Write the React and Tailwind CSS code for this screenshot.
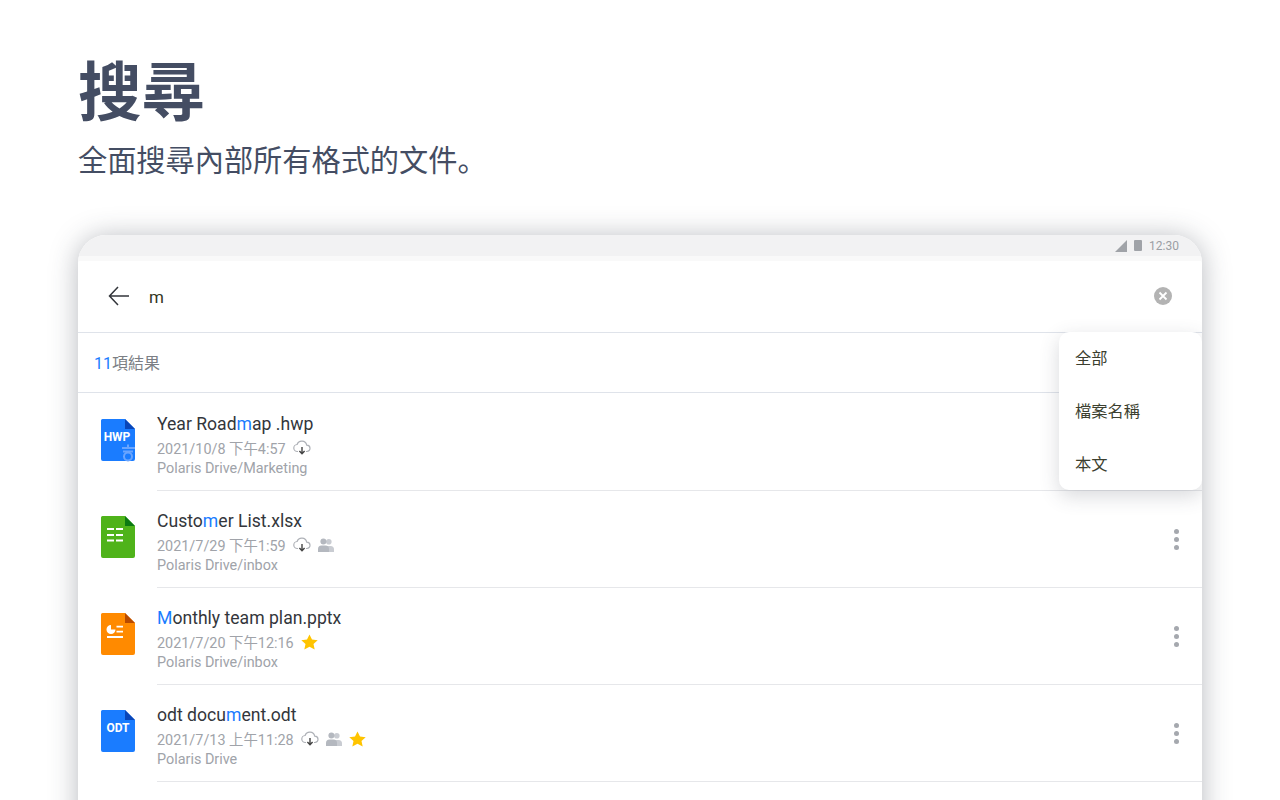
import React from "react";

const FONT = { fontFamily: '"Roboto", "Noto Sans CJK SC", sans-serif' };

const FileIcon = ({ color, fold, children }) => (
   <svg width="36" height="44" viewBox="0 0 36 44" className="shrink-0">
      <path d="M2.5 1 H25 L35 11 V41 a2 2 0 0 1 -2 2 H3 a2 2 0 0 1 -2 -2 V2.5 a1.5 1.5 0 0 1 1.5 -1.5 Z" fill={color} />
      <path d="M25 1 L35 11 H25 Z" fill={fold} />
      {children}
   </svg>
);

const HwpIcon = () => (
   <FileIcon color="#1a7cff" fold="#0a46b8">
      <text x="17" y="23" textAnchor="middle" fill="#fff" fontSize="12" fontWeight="700" fontFamily="Roboto">HWP</text>
      <g stroke="#6aa5ff" strokeWidth="2" fill="none">
         <path d="M22 30 h13 M28 26.5 v3 M23 33.5 h10" />
         <circle cx="28" cy="38.5" r="4" />
      </g>
   </FileIcon>
);

const XlsIcon = () => (
   <FileIcon color="#4fb31a" fold="#0b7a12">
      <g stroke="#fff" strokeWidth="2">
         <path d="M7 14 h7 M16 14 h7 M7 20 h7 M16 20 h7 M7 25.5 h7 M16 25.5 h7" />
      </g>
   </FileIcon>
);

const PptIcon = () => (
   <FileIcon color="#ff8a00" fold="#b84a00">
      <path d="M11 13 a4.5 4.5 0 1 0 4.5 4.5 h-4.5 Z" fill="#fff" />
      <path d="M16.5 14.6 h6.5 M16.5 19.7 h6.5" stroke="#fff" strokeWidth="1.8" />
      <path d="M7 25 h16" stroke="#fff" strokeWidth="2" />
   </FileIcon>
);

const OdtIcon = () => (
   <FileIcon color="#1a7cff" fold="#0a46b8">
      <text x="18" y="23" textAnchor="middle" fill="#fff" fontSize="12" fontWeight="700" fontFamily="Roboto">ODT</text>
   </FileIcon>
);

const CloudDown = () => (
   <svg width="18" height="16" viewBox="0 0 18 16" fill="none" className="shrink-0 mb-[3px]">
      <path d="M5 11.5 H4.5 a3.5 3.5 0 0 1 -0.4 -7 a5 5 0 0 1 9.6 0.6 a3.2 3.2 0 0 1 0.2 6.4 H13" stroke="#aeb1b7" strokeWidth="1.2" />
      <path d="M9 7 V13.5 M6.4 11 L9 13.8 L11.6 11" stroke="#444" strokeWidth="1.4" />
   </svg>
);

const Shared = () => (
   <svg width="16" height="14" viewBox="0 0 16 14" className="shrink-0 mb-[3px]">
      <circle cx="10.8" cy="3.8" r="2.8" fill="#c9ccd2" />
      <path d="M9 8 h3.5 a3.5 3.5 0 0 1 3.5 3.5 V14 H10 Z" fill="#c9ccd2" />
      <circle cx="5.4" cy="3.6" r="3" fill="#b4b8bf" />
      <path d="M0 14 V11 a3.5 3.5 0 0 1 3.5 -3.5 h4 A3.5 3.5 0 0 1 11 11 v3 Z" fill="#b4b8bf" />
   </svg>
);

const Star = () => (
   <svg width="17" height="16" viewBox="0 0 17 16" className="shrink-0 mb-[3px]">
      <path d="M8.5 0.4 L11 5.5 L16.7 6.2 L12.5 10 L13.7 15.6 L8.5 12.8 L3.3 15.6 L4.5 10 L0.3 6.2 L6 5.5 Z" fill="#ffc400" />
   </svg>
);

const Dots = () => (
   <div className="flex flex-col gap-[3px]">
      <span className="w-[5px] h-[5px] rounded-full bg-[#a5a8ae]"></span>
      <span className="w-[5px] h-[5px] rounded-full bg-[#a5a8ae]"></span>
      <span className="w-[5px] h-[5px] rounded-full bg-[#a5a8ae]"></span>
   </div>
);

const Row = ({ icon, before, hit, after, date, path, children, menu }) => (
   <div className="flex h-[97px]">
      <div className="w-[79px] pl-[22px] pt-[24px] shrink-0">{icon}</div>
      <div className="flex-1 flex items-center border-b border-[#e6e7ea]">
         <div className="flex-1 self-start pt-[18px]">
            <div className="text-[17.6px] leading-[24px] text-[#33363b]">
               {before}
               <span className="text-[#1a7cff]">{hit}</span>
               {after}
            </div>
            <div className="flex items-center gap-[7px] h-[21px] mt-[3px] text-[14.4px] text-[#a0a3a9]">
               <span>{date}</span>
               {children}
            </div>
            <div className="text-[14.4px] leading-[18px] text-[#a0a3a9]">{path}</div>
         </div>
         {menu && (
            <div className="pr-[23px]">
               <Dots />
            </div>
         )}
      </div>
   </div>
);

const MenuItem = ({ label }) => (
   <div className="h-[53px] flex items-center">{label}</div>
);

const App = () => {
   return (
      <div className="h-[800px] overflow-hidden bg-white" style={FONT}>
         <div className="pl-[78px] pt-[52px]">
            <h1 className="text-[63.5px] leading-[84px] font-bold text-[#444d63]">搜尋</h1>
            <p className="text-[29.2px] leading-[40px] mt-[5px] text-[#444d63]">全面搜尋內部所有格式的文件。</p>
         </div>

         <div className="relative ml-[78px] mt-[54px] w-[1124px] h-[600px] bg-white rounded-t-[28px] overflow-hidden shadow-[0_2px_28px_rgba(50,55,70,0.35)]">
            <div className="h-[21px] bg-[#f2f2f3] flex items-center justify-end gap-[5px] pr-[23px] text-[12px] text-[#9b9ea4]">
               <svg width="12" height="12" viewBox="0 0 12 12">
                  <path d="M12 0 V12 H0 Z" fill="#a0a3a8" />
               </svg>
               <span className="w-[8px] h-[11px] bg-[#a0a3a8] rounded-[1px] mx-[2px]"></span>
               <span>12:30</span>
            </div>
            <div className="h-[5px] bg-[#f9f9f9]"></div>

            <div className="h-[72px] pb-[1px] flex items-center border-b border-[#dfe3ea]">
               <svg width="24" height="24" viewBox="0 0 24 24" fill="none" className="ml-[29px]" stroke="#33363b" strokeWidth="1.5">
                  <path d="M22 12 H2.5 M11 3 L2.5 12 L11 21" />
               </svg>
               <span className="ml-[18px] mt-[3px] text-[17px] text-[#33361f]">m</span>
               <span className="ml-auto mr-[30px] w-[18px] h-[18px] rounded-full bg-[#b3b3b3] flex items-center justify-center">
                  <svg width="10" height="10" viewBox="0 0 10 10" stroke="#fff" strokeWidth="1.8">
                     <path d="M1.5 1.5 L8.5 8.5 M8.5 1.5 L1.5 8.5" />
                  </svg>
               </span>
            </div>

            <div className="h-[60px] flex items-center pt-[2px] pl-[16px] border-b border-[#dfe3ea] text-[16px] text-[#7c7f85]">
               <span className="text-[#1a7cff]">11</span>項結果
            </div>

            <div className="pt-[1px]">
               <Row icon={<HwpIcon />} before="Year Road" hit="m" after="ap .hwp" date="2021/10/8 下午4:57" path="Polaris Drive/Marketing">
                  <CloudDown />
               </Row>
               <Row icon={<XlsIcon />} before="Custo" hit="m" after="er List.xlsx" date="2021/7/29 下午1:59" path="Polaris Drive/inbox" menu>
                  <CloudDown />
                  <Shared />
               </Row>
               <Row icon={<PptIcon />} before="" hit="M" after="onthly team plan.pptx" date="2021/7/20 下午12:16" path="Polaris Drive/inbox" menu>
                  <Star />
               </Row>
               <Row icon={<OdtIcon />} before="odt docu" hit="m" after="ent.odt" date="2021/7/13 上午11:28" path="Polaris Drive" menu>
                  <CloudDown />
                  <Shared />
                  <Star />
               </Row>
            </div>

            <div className="absolute right-0 top-[97px] w-[143px] h-[158px] bg-white rounded-[10px] shadow-[0_6px_20px_rgba(60,66,80,0.2)] pt-[1px] pl-[16px] text-[16.3px] text-[#3c3f2f]">
               <MenuItem label="全部" />
               <MenuItem label="檔案名稱" />
               <MenuItem label="本文" />
            </div>
         </div>
      </div>
   );
};

export default App;
